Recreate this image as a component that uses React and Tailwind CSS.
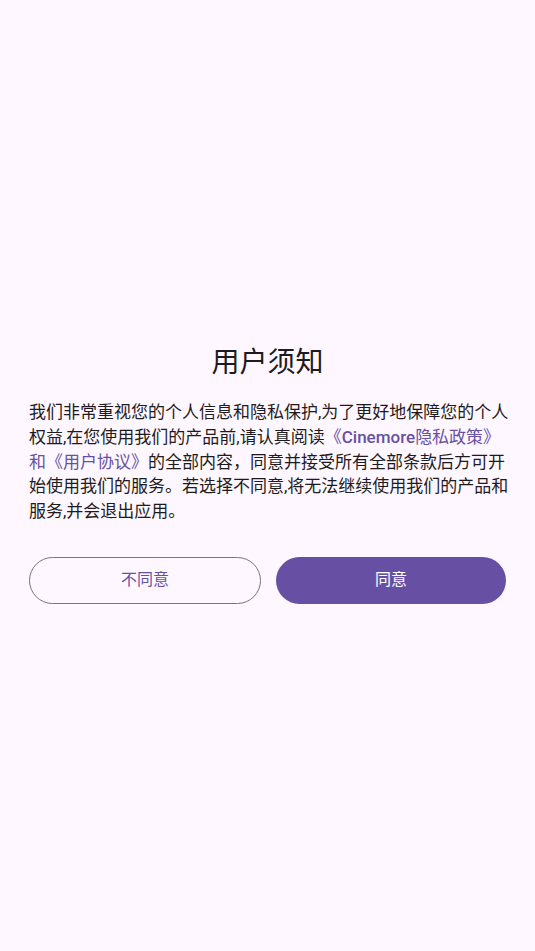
export default function App() {
  return (
    <div
      className="min-h-screen bg-[#fef7ff] flex flex-col justify-center px-[29px] pb-[5px] text-[#1d1b20]"
      style={{ fontFamily: "Roboto, 'Noto Sans CJK SC', sans-serif" }}
    >
      <h1 className="mt-[3px] text-center text-[28px] leading-[36px]">用户须知</h1>

      <p className="mt-[19px] -mr-[6px] text-[17px] leading-[24.7px]">
        我们非常重视您的个人信息和隐私保护,为了更好地保障您的个人权益,在您使用我们的产品前,请认真阅读
        <span className="text-[#6750a4]">
          《<span className="font-medium">Cinemore</span>隐私政策》和《用户协议》
        </span>
        的全部内容，同意并接受所有全部条款后方可开始使用我们的服务。若选择不同意,将无法继续使用我们的产品和服务,并会退出应用。
      </p>

      <div className="mt-[33px] flex gap-[15px]">
        <button className="flex-1 h-[47px] rounded-full border border-[#79747e] text-[16px] text-[#6750a4]">
          不同意
        </button>
        <button className="flex-1 h-[47px] rounded-full bg-[#6750a4] text-[16px] text-white">
          同意
        </button>
      </div>
    </div>
  );
}
